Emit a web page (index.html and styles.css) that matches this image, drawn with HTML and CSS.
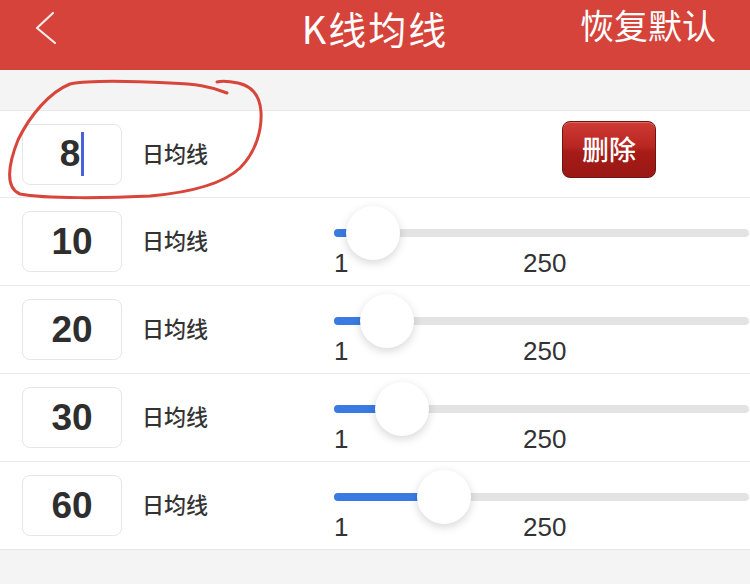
FILE: index.html
```html
<!DOCTYPE html>
<html lang="zh">
<head>
<meta charset="utf-8">
<title>K线均线</title>
<link rel="stylesheet" href="styles.css">
</head>
<body>
<div class="page">
  <header class="topbar">
    <div class="back">
      <svg width="24" height="34" viewBox="0 0 24 34"><polyline points="19,2 3,17 21,32" fill="none" stroke="#fbeae8" stroke-width="2.2" stroke-linecap="round" stroke-linejoin="round"/></svg>
    </div>
    <h1 class="title">K线均线</h1>
    <div class="reset">恢复默认</div>
  </header>
  <div class="spacer"></div>
  <ul class="list">
    <li class="row row-first">
      <div class="num-box"><span>8</span><span class="caret"></span></div>
      <span class="label">日均线</span>
      <div class="control control-action"><button class="del">删除</button></div>
    </li>
    <li class="row">
      <div class="num-box"><span>10</span></div>
      <span class="label">日均线</span>
      <div class="control">
        <div class="track"><div class="fill" style="width:38.6px"></div><div class="thumb" style="left:11.6px"></div></div>
        <div class="scale"><span class="min">1</span><span>250</span></div>
      </div>
    </li>
    <li class="row">
      <div class="num-box"><span>20</span></div>
      <span class="label">日均线</span>
      <div class="control">
        <div class="track"><div class="fill" style="width:52.6px"></div><div class="thumb" style="left:25.6px"></div></div>
        <div class="scale"><span class="min">1</span><span>250</span></div>
      </div>
    </li>
    <li class="row">
      <div class="num-box"><span>30</span></div>
      <span class="label">日均线</span>
      <div class="control">
        <div class="track"><div class="fill" style="width:67.6px"></div><div class="thumb" style="left:40.6px"></div></div>
        <div class="scale"><span class="min">1</span><span>250</span></div>
      </div>
    </li>
    <li class="row">
      <div class="num-box"><span>60</span></div>
      <span class="label">日均线</span>
      <div class="control">
        <div class="track"><div class="fill" style="width:109.6px"></div><div class="thumb" style="left:82.6px"></div></div>
        <div class="scale"><span class="min">1</span><span>250</span></div>
      </div>
    </li>
  </ul>
  <svg class="annotation" width="750" height="584" viewBox="0 0 750 584">
    <path d="M227,93 C210,86 195,84 170,83 C130,81 90,80 70,84 C50,92 30,115 18,140 C8,165 5,188 20,194 C45,199 110,198 150,196 C195,192 225,182 240,168 C256,152 262,130 261,112 C260,95 252,86 238,83 C228,81 221,81 217,82" fill="none" stroke="#d8453a" stroke-width="3" stroke-linecap="round" stroke-linejoin="round"/>
  </svg>
</div>
</body>
</html>
```
FILE: styles.css
```css
html, body {
  margin: 0;
  padding: 0;
}
body {
  background: #f4f4f4;
  font-family: "Noto Sans CJK SC", "Liberation Sans", sans-serif;
  color: #333;
}
.page {
  position: relative;
  width: 750px;
  height: 584px;
  overflow: hidden;
}
.topbar {
  height: 70px;
  background: #d5433b;
  display: grid;
  grid-template-columns: 1fr auto 1fr;
  align-items: start;
  color: #fff;
}
.back {
  padding-left: 34px;
  padding-top: 11px;
}
.back svg {
  display: block;
}
.title {
  margin: 0;
  font-family: "Noto Sans CJK SC", sans-serif;
  font-weight: 400;
  font-size: 38px;
  line-height: normal;
  letter-spacing: 2px;
}
.reset {
  justify-self: end;
  padding-right: 34px;
  font-size: 34px;
  line-height: normal;
}
.spacer {
  height: 40px;
}
.list {
  list-style: none;
  margin: 0;
  padding: 0;
  background: #fff;
  border-top: 1px solid #e8e8e8;
}
.row {
  display: flex;
  align-items: center;
  height: 87px;
  border-bottom: 1px solid #e8e8e8;
  padding-left: 22px;
}
.row-first {
  height: 86px;
}
.num-box {
  flex: none;
  width: 98px;
  height: 59px;
  border: 1px solid #e6e6e6;
  border-radius: 8px;
  display: flex;
  align-items: center;
  justify-content: center;
  font-family: "Liberation Sans", Arial, sans-serif;
  font-weight: 700;
  font-size: 37px;
  color: #2e2e2e;
}
.caret {
  width: 3px;
  height: 44px;
  margin-left: 1px;
  background: #4a5fd8;
}
.label {
  flex: none;
  margin-left: 20px;
  padding-bottom: 5px;
  font-size: 22px;
  font-weight: 500;
  color: #333;
}
.control {
  flex: none;
  margin-left: auto;
  width: 416px;
  align-self: stretch;
  padding-top: 31px;
  box-sizing: border-box;
}
.control-action {
  padding-top: 10px;
}
.del {
  margin-left: 228px;
  width: 94px;
  height: 57px;
  border: 1px solid #70140f;
  border-radius: 8px;
  background: linear-gradient(#cf3a34 0%, #b82621 45%, #a51b17 55%, #9a1814 100%);
  color: #fff;
  font-family: "Noto Sans CJK SC", sans-serif;
  font-weight: 500;
  font-size: 27px;
  line-height: 1;
  padding: 0 0 2px;
  box-shadow: inset 0 1px 0 rgba(255,255,255,0.25);
}
.track {
  position: relative;
  width: 415px;
  height: 8px;
  border-radius: 4px;
  background: #e3e3e3;
}
.fill {
  height: 100%;
  border-radius: 4px;
  background: #3a7be3;
}
.thumb {
  position: absolute;
  top: -23px;
  width: 54px;
  height: 54px;
  border-radius: 50%;
  background: #fff;
  box-shadow: 0 3px 10px rgba(0,0,0,0.16);
}
.scale {
  display: flex;
  margin-top: 11px;
  font-family: "Liberation Sans", Arial, sans-serif;
  font-size: 26px;
  line-height: 30px;
  color: #333;
}
.scale .min {
  width: 189px;
}
.annotation {
  position: absolute;
  top: 0;
  left: 0;
  pointer-events: none;
}
```
